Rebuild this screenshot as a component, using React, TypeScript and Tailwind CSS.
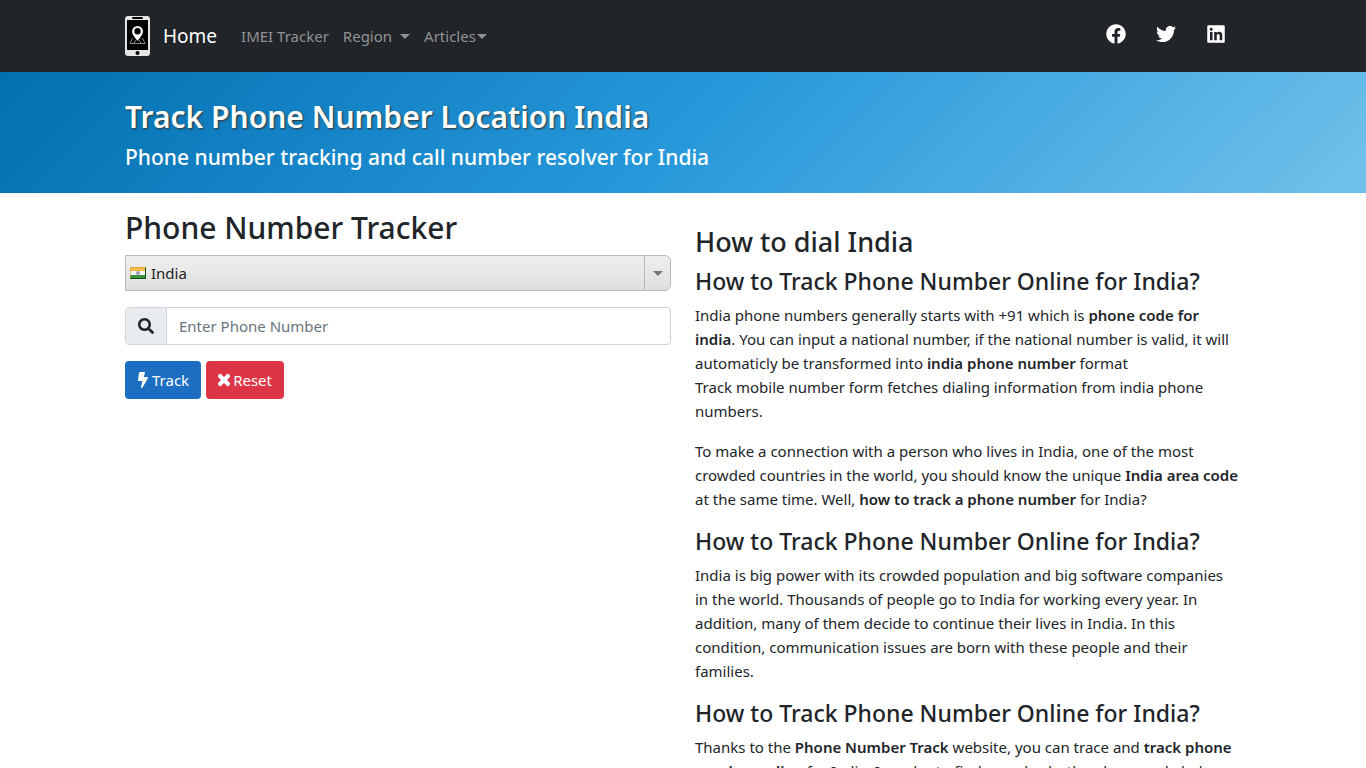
import type { ReactNode } from 'react';
import { FaBolt, FaFacebook, FaLinkedin, FaSearch, FaTimes, FaTwitter } from 'react-icons/fa';

const socials = [
  { label: 'Facebook', icon: <FaFacebook /> },
  { label: 'Twitter', icon: <FaTwitter /> },
  { label: 'LinkedIn', icon: <FaLinkedin /> }
];

function Logo() {
  return (
    <svg viewBox="0 0 26 40" className="h-10 w-[26px]" aria-hidden="true">
      <rect x="0" y="0" width="25" height="40" rx="3" fill="#e4e5e6" />
      <rect x="2" y="4" width="21" height="30" fill="#000" />
      <rect x="7" y="1" width="11" height="2" rx="1" fill="#000" />
      <circle cx="12.5" cy="37" r="2" fill="#000" />
      <path d="M7.5 22 5 27.5h15L17.5 22M9 27l2-3M16 27l-2-3" fill="none" stroke="#aaa" strokeWidth="0.8" />
      <path
        d="M12.5 10a5.4 5.4 0 0 0-5.4 5.4c0 3.6 5.4 9.3 5.4 9.3s5.4-5.7 5.4-9.3a5.4 5.4 0 0 0-5.4-5.4Zm0 2a3.2 3.2 0 1 1 0 6.4 3.2 3.2 0 0 1 0-6.4Z"
        fill="#fff"
        fillRule="evenodd"
      />
    </svg>
  );
}

function Flag() {
  return (
    <svg viewBox="0 0 16 12" className="h-3 w-4" aria-hidden="true">
      <rect width="16" height="4" fill="#f3bd45" />
      <rect y="4" width="16" height="4" fill="#f4f4f4" />
      <rect y="8" width="16" height="4" fill="#3d963d" />
      <circle cx="8" cy="6" r="2" fill="#9aa0b8" />
      <path d="M0 11.5h16M15.5 0v12" stroke="#14521a" fill="none" />
      <path d="M0 .5h16M.5 0v11" stroke="#d99a2b" strokeOpacity="0.6" fill="none" />
    </svg>
  );
}

function Caret() {
  return (
    <svg viewBox="0 0 10 5" className="h-[5px] w-[10px]" aria-hidden="true">
      <path d="M0 0h10L5 5Z" fill="currentColor" />
    </svg>
  );
}

function Question({ children }: { children: ReactNode }) {
  return (
    <section>
      <h3 className="mb-2 text-[23px] leading-7 font-medium">How to Track Phone Number Online for India?</h3>
      {children}
    </section>
  );
}

export default function App() {
  return (
    <div className="h-screen overflow-hidden bg-white font-['Noto_Sans',sans-serif] text-[15px] leading-6 text-[#212529]">
      <nav className="bg-[#212529]">
        <div className="mx-auto flex h-[72px] max-w-[1140px] items-center px-3">
          <a href="#" aria-label="Phone tracker">
            <Logo />
          </a>
          <a href="#" className="ml-3 text-[19px] text-white">
            Home
          </a>
          <div className="ml-6 flex items-center gap-[14px] text-[#909294]">
            <a href="#">IMEI Tracker</a>
            <button className="flex items-center gap-2">
              Region <Caret />
            </button>
            <button className="flex items-center gap-px">
              Articles <Caret />
            </button>
          </div>
          <div className="mr-[15px] mb-1 ml-auto flex gap-[30px] text-xl text-white">
            {socials.map((social) => (
              <a key={social.label} href="#" aria-label={social.label}>
                {social.icon}
              </a>
            ))}
          </div>
        </div>
      </nav>

      <header className="bg-[linear-gradient(135deg,#036eb0_0%,#2698da_50%,#71c2ea_100%)] pt-[26px] pb-[22px] text-white">
        <div className="mx-auto max-w-[1140px] px-3">
          <h1 className="mb-2 text-[30px] leading-[38px] font-semibold [text-shadow:1px_1px_2px_#333]">
            Track Phone Number Location India
          </h1>
          <h2 className="text-[21px] leading-[27px] font-medium">
            Phone number tracking and call number resolver for India
          </h2>
        </div>
      </header>

      <main className="mx-auto grid max-w-[1140px] grid-cols-2 gap-6 px-3 pt-4">
        <form onSubmit={(e) => e.preventDefault()}>
          <h2 className="mb-2 text-[30px] leading-[38px] font-medium">Phone Number Tracker</h2>

          <div className="relative mb-4">
            <select
              aria-label="Country"
              className="block h-9 w-full appearance-none rounded-r-md border border-[#b8b8b8] bg-linear-to-b from-[#efefef] to-[#dfdfe0] pl-[25px] text-[#222]"
            >
              <option>India</option>
            </select>
            <span className="pointer-events-none absolute inset-y-0 left-[5px] flex items-center">
              <Flag />
            </span>
            <span className="pointer-events-none absolute inset-y-px right-px flex w-[26px] items-center justify-center border-l border-[#b8b8b8] text-[#777]">
              <Caret />
            </span>
          </div>

          <div className="mb-4 flex h-[38px] rounded border border-[#ced4da]">
            <label htmlFor="phone" className="flex w-[41px] items-center justify-center rounded-l border-r border-[#ced4da] bg-[#e9ecef] text-base">
              <FaSearch />
              <span className="sr-only">Phone number</span>
            </label>
            <input
              id="phone"
              type="tel"
              placeholder="Enter Phone Number"
              className="min-w-0 flex-1 rounded-r px-3 placeholder:text-[#6c757d]"
            />
          </div>

          <div className="flex gap-[5px] text-white">
            <button type="submit" className="flex h-[38px] items-center gap-[3px] rounded bg-[#1b6ec2] px-3">
              <svg viewBox="0 0 320 512" className="h-4 w-3" fill="currentColor" aria-hidden="true">
                <path d="M296 160H180.600l42.600-129.800C227.200 15 215.700 0 200 0H56C44 0 33.800 8.900 32.200 20.800l-32 240C-1.700 275.200 9.500 288 24 288h118.700L96.600 482.500c-3.600 15.200 8 29.500 23.300 29.500 8.400 0 16.400-4.400 20.800-12l176-304c9.300-15.900-2.200-36-20.700-36z" />
              </svg>
              Track
            </button>
            <button type="reset" className="flex h-[38px] items-center gap-[3px] rounded bg-[#dc3545] px-3">
              <FaTimes className="h-4 w-3 stroke-white stroke-[40px]" /> Reset
            </button>
          </div>
        </form>

        <article className="pt-4 [&_b]:font-semibold [&_p]:mb-4">
          <h2 className="mb-2 text-[27px] leading-[34px] font-medium">How to dial India</h2>
          <Question>
            <p>
              India phone numbers generally starts with +91 which is <b>phone code for india</b>. You can input a
              national number, if the national number is valid, it will automaticly be transformed into{' '}
              <b>india phone number</b> format
              <br />
              Track mobile number form fetches dialing information from india phone numbers.
            </p>
            <p>
              To make a connection with a person who lives in India, one of the most crowded countries in the world,
              you should know the unique <b>India area code</b> at the same time. Well,{' '}
              <b>how to track a phone number</b> for India?
            </p>
          </Question>
          <Question>
            <p>
              India is big power with its crowded population and big software companies in&nbsp;the world. Thousands of
              people go to India for working every year. In addition, many of them decide to continue their lives in
              India. In this condition, communication issues are born with these people and their families.
            </p>
          </Question>
          <Question>
            <p>
              Thanks to the <b>Phone Number Track</b> website, you can trace and <b>track phone number online</b> for
              India. In order to find somebody, the phone code helps.
            </p>
          </Question>
        </article>
      </main>
    </div>
  );
}
